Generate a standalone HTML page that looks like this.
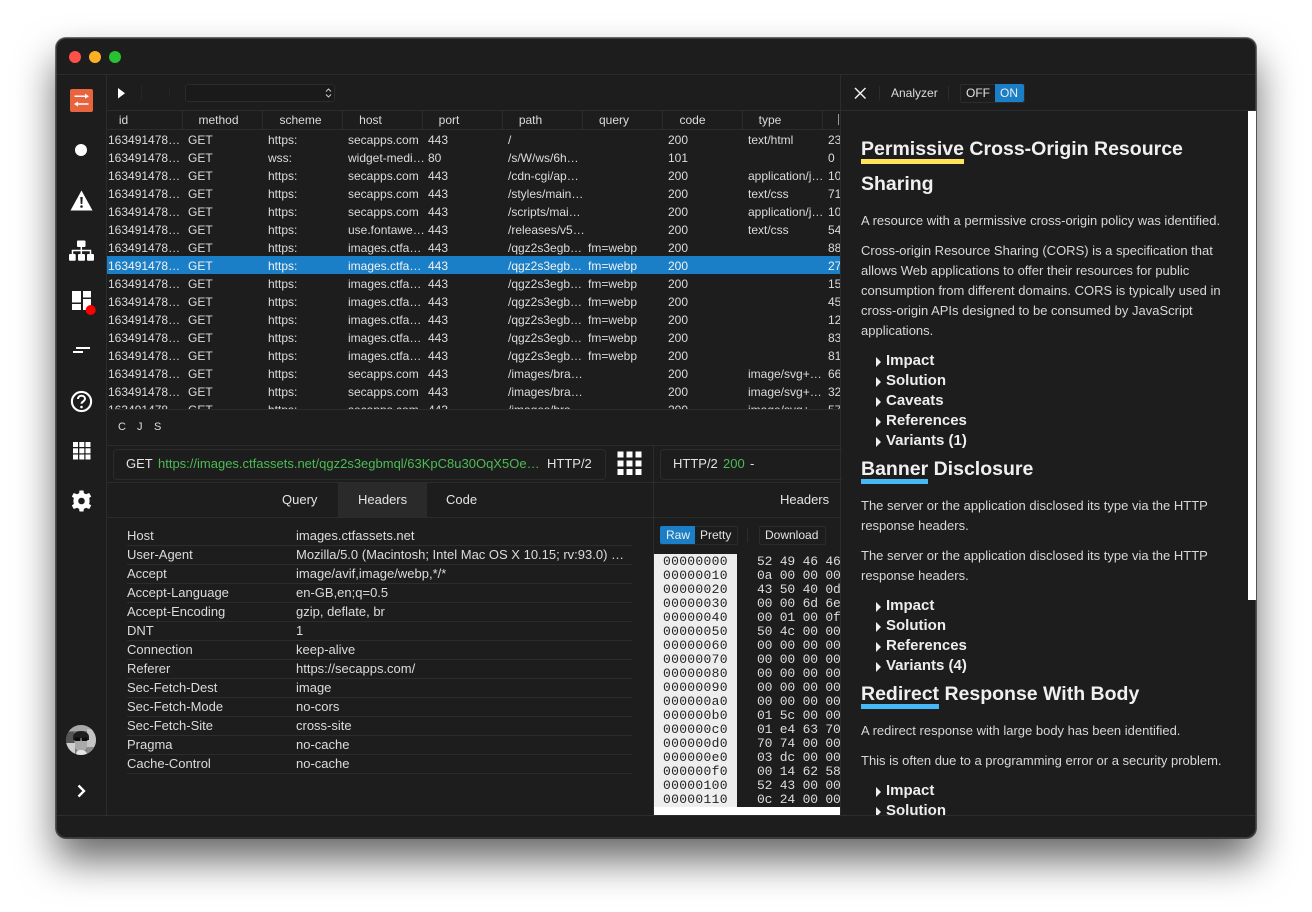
<!DOCTYPE html>
<html><head><meta charset="utf-8"><title>Analyzer</title>
<style>
html,body{margin:0;padding:0;width:1312px;height:912px;background:#fff;overflow:hidden}
body{font-family:"Liberation Sans",sans-serif;color:#e4e4e4;font-size:12px}
#w{position:absolute;left:56px;top:38px;width:1200px;height:800px;box-sizing:border-box;background:#1d1d1d;border-radius:10px;box-shadow:inset 0 0 0 1px #3c3c3c,0 0 0 1px rgba(0,0,0,.55),0 22px 40px rgba(0,0,0,.6);overflow:hidden}
#a{position:absolute;left:0;top:0;width:1312px;height:912px}
#a div,#a span,#a svg{position:absolute}
.h{height:1px;background:#2c2c2c}
.v{width:1px;background:#2c2c2c}
.t{white-space:nowrap;line-height:18px;height:18px}
#tbl{left:107px;top:130px;width:733px;height:279px;overflow:hidden;line-height:18px}
.r{left:0;width:733px;height:18px;color:#dcdcdc}
.r span{white-space:nowrap;top:1px}
.r span:nth-child(1){left:1px}.r span:nth-child(2){left:81px}.r span:nth-child(3){left:161px}.r span:nth-child(4){left:241px}.r span:nth-child(5){left:321px}.r span:nth-child(6){left:401px}.r span:nth-child(7){left:481px}.r span:nth-child(8){left:561px}.r span:nth-child(9){left:641px}.r span:nth-child(10){left:721px}
.sel{background:#1b7fc7;color:#f2f2f2}
.hc{top:111px;height:18px;line-height:18px;text-align:center;color:#dcdcdc}
.k{left:127px}.val{left:296px}
.kv{color:#dcdcdc;font-size:13px}
.p{left:861px;font-size:13px;color:#d8d8d8;white-space:nowrap;line-height:20px;height:20px}
.li{left:886px;font-size:15px;font-weight:bold;color:#eee;white-space:nowrap;line-height:20px;height:20px}
.tri{left:876px;width:0;height:0;border-left:5px solid #eee;border-top:5px solid transparent;border-bottom:5px solid transparent}
.hh{left:861px;font-size:19.5px;font-weight:bold;color:#f0f0f0;white-space:nowrap;line-height:30px;height:30px}
.off{color:#222;font:13px/14px "Liberation Mono",monospace;letter-spacing:.3px;white-space:pre}
.hex{color:#ddd;font:13px/14px "Liberation Mono",monospace;letter-spacing:-.2px;white-space:pre}
</style></head><body>
<div id="w"></div>
<div id="a">
<!-- traffic lights -->
<div style="left:69px;top:51px;width:12px;height:12px;border-radius:50%;background:#fd5049"></div>
<div style="left:89px;top:51px;width:12px;height:12px;border-radius:50%;background:#fdb024"></div>
<div style="left:109px;top:51px;width:12px;height:12px;border-radius:50%;background:#27c132"></div>
<!-- frame lines -->
<div class="h" style="left:57px;top:74px;width:1198px"></div>
<div class="v" style="left:106px;top:75px;height:740px"></div>
<div class="h" style="left:57px;top:815px;width:1198px"></div>
<div class="h" style="left:107px;top:110px;width:1148px"></div>
<div class="h" style="left:107px;top:129px;width:734px"></div>
<div class="v" style="left:840px;top:75px;height:740px"></div>
<div class="h" style="left:107px;top:409px;width:734px"></div>
<div class="h" style="left:107px;top:445px;width:734px"></div>
<div class="h" style="left:107px;top:482px;width:734px"></div>
<div class="h" style="left:107px;top:517px;width:734px"></div>
<div class="v" style="left:653px;top:446px;height:369px"></div>

<!-- sidebar icons -->
<svg style="left:70px;top:89px" width="23" height="23" viewBox="0 0 23 23"><rect width="23" height="23" rx="2" fill="#e8643c"/><path d="M4.500 7.200h11M7.500 15h11" stroke="#fff" stroke-width="1.500" fill="none"/><path d="M15 4.700l4 2.500-4 2.500zM8 12.500l-4 2.500 4 2.500z" fill="#fff"/></svg>
<svg style="left:75px;top:144px" width="12" height="12"><circle cx="6" cy="6" r="6" fill="#fff"/></svg>
<svg style="left:70px;top:190px" width="23" height="21" viewBox="0 0 23 21"><path d="M11.500 0.500L22.500 20.500H.5z" fill="#fff"/><path d="M10.300 7h2.400l-.4 7h-1.600z" fill="#1d1d1d"/><circle cx="11.500" cy="16.500" r="1.300" fill="#1d1d1d"/></svg>
<svg style="left:69px;top:240px" width="25" height="21" viewBox="0 0 25 21"><rect x="8" y="0.500" width="8.500" height="6.500" rx="1" fill="#fff"/><rect x="0" y="14" width="6.700" height="6.700" rx="1" fill="#fff"/><rect x="9" y="14" width="7" height="6.700" rx="1" fill="#fff"/><rect x="18" y="14" width="7" height="6.700" rx="1" fill="#fff"/><path d="M12.300 7v7M3.500 14v-3.500h18V14" stroke="#fff" stroke-width="1.500" fill="none"/></svg>
<svg style="left:72px;top:291px" width="26" height="26" viewBox="0 0 26 26"><rect x="0" y="0" width="9" height="11.500" fill="#fff"/><rect x="0" y="13" width="9" height="6" fill="#fff"/><rect x="11" y="0" width="8" height="6.500" fill="#fff"/><rect x="11" y="8" width="8" height="11" fill="#fff"/><circle cx="18.700" cy="19" r="5" fill="#f00"/></svg>
<svg style="left:73px;top:346px" width="17" height="9" viewBox="0 0 17 9"><rect x="3" y="1" width="14" height="2" fill="#fff"/><rect x="0" y="5" width="10" height="2" fill="#fff"/></svg>
<svg style="left:70px;top:390px" width="23" height="23" viewBox="0 0 23 23"><circle cx="11.500" cy="11.500" r="9.600" stroke="#fff" stroke-width="2.100" fill="none"/><path d="M8 9c0-2 1.500-3.300 3.500-3.300S15 7 15 8.800c0 2.600-3.500 2.600-3.500 5" stroke="#fff" stroke-width="2" fill="none"/><circle cx="11.500" cy="17" r="1.300" fill="#fff"/></svg>
<svg style="left:73px;top:442px" width="18" height="18" viewBox="0 0 18 18" fill="#fff"><rect x="0" y="0" width="5" height="5"/><rect x="6.300" y="0" width="5" height="5"/><rect x="12.500" y="0" width="5" height="5"/><rect x="0" y="6.300" width="5" height="5"/><rect x="6.300" y="6.300" width="5" height="5"/><rect x="12.500" y="6.300" width="5" height="5"/><rect x="0" y="12.500" width="5" height="5"/><rect x="6.300" y="12.500" width="5" height="5"/><rect x="12.500" y="12.500" width="5" height="5"/></svg>
<svg style="left:71px;top:490px" width="21" height="22" viewBox="0 0 21 22"><circle cx="10.500" cy="11" r="5.700" fill="none" stroke="#fff" stroke-width="4.800"/><path d="M8.500 0.500h4l.5 3.500h-5zM8.500 21.500h4l.5-3.500h-5zM.8 6.500l2-3.500 3.300 1.300-2.500 4.300zM20.200 15.500l-2 3.500-3.300-1.300 2.500-4.300zM.8 15.500l2 3.500 3.300-1.300-2.500-4.300zM20.200 6.500l-2-3.500-3.300 1.300 2.500 4.300z" fill="#fff"/></svg>
<svg style="left:66px;top:725px" width="30" height="30" viewBox="0 0 30 30"><defs><clipPath id="c"><circle cx="15" cy="15" r="15"/></clipPath></defs><g clip-path="url(#c)"><rect width="30" height="30" fill="#7a7a7a"/><rect x="0" y="0" width="30" height="6" fill="#a8a8a8"/><rect x="21" y="4" width="9" height="18" fill="#c4c4c4"/><rect x="0" y="18" width="9" height="12" fill="#cfcfcf"/><rect x="0" y="7" width="8" height="11" fill="#555"/><path d="M7 12C7 4 23 4 23 12v3H7z" fill="#1e1e1e"/><path d="M9 13h12v8c0 4-3 5-6 5s-6-1-6-5z" fill="#a9a9a9"/><rect x="8.500" y="12.500" width="6" height="3.500" rx="1" fill="#0c0c0c"/><rect x="15.500" y="12.500" width="6" height="3.500" rx="1" fill="#0c0c0c"/><path d="M10 30c0-4 2-5 5-5s6 1 6 5z" fill="#e4e4e4"/><rect x="21" y="22" width="9" height="8" fill="#8c8c8c"/></g></svg>
<svg style="left:76px;top:784px" width="10" height="14" viewBox="0 0 10 14"><path d="M2.500 1.500L8 7 2.500 12.500" stroke="#fff" stroke-width="2.300" fill="none"/></svg>

<!-- toolbar -->
<svg style="left:118px;top:88px" width="8" height="11"><path d="M0 0L7 5.200 0 10.500z" fill="#fff"/></svg>
<div class="v" style="left:141px;top:85px;height:15px;background:#262626"></div>
<div class="v" style="left:169px;top:89px;height:7px;background:#262626"></div>
<div style="left:185px;top:84px;width:148px;height:16px;border:1px solid #2c2c2c;border-radius:3px;background:#1a1a1a"></div>
<svg style="left:325px;top:87px" width="7" height="12" viewBox="0 0 7 12"><path d="M1 4.500L3.500 2 6 4.500M1 7.500L3.500 10 6 7.500" stroke="#ccc" stroke-width="1" fill="none"/></svg>

<!-- table header -->
<span class="hc" style="left:107px;width:33px">id</span>
<span class="hc" style="left:183px;width:71px">method</span>
<span class="hc" style="left:263px;width:75px">scheme</span>
<span class="hc" style="left:343px;width:55px">host</span>
<span class="hc" style="left:423px;width:52px">port</span>
<span class="hc" style="left:503px;width:55px">path</span>
<span class="hc" style="left:583px;width:62px">query</span>
<span class="hc" style="left:663px;width:59px">code</span>
<span class="hc" style="left:743px;width:54px">type</span>
<div class="v" style="left:182px;top:111px;height:18px"></div>
<div class="v" style="left:262px;top:111px;height:18px"></div>
<div class="v" style="left:342px;top:111px;height:18px"></div>
<div class="v" style="left:422px;top:111px;height:18px"></div>
<div class="v" style="left:502px;top:111px;height:18px"></div>
<div class="v" style="left:582px;top:111px;height:18px"></div>
<div class="v" style="left:662px;top:111px;height:18px"></div>
<div class="v" style="left:742px;top:111px;height:18px"></div>
<div class="v" style="left:822px;top:111px;height:18px"></div>
<div style="left:838px;top:114px;width:1px;height:11px;background:#999"></div>

<!-- table -->
<div id="tbl">
<div class="r" style="top:0"><span>163491478…</span><span>GET</span><span>https:</span><span>secapps.com</span><span>443</span><span>/</span><span></span><span>200</span><span>text/html</span><span>23</span></div>
<div class="r" style="top:18px"><span>163491478…</span><span>GET</span><span>wss:</span><span>widget-medi…</span><span>80</span><span>/s/W/ws/6h…</span><span></span><span>101</span><span></span><span>0</span></div>
<div class="r" style="top:36px"><span>163491478…</span><span>GET</span><span>https:</span><span>secapps.com</span><span>443</span><span>/cdn-cgi/ap…</span><span></span><span>200</span><span>application/j…</span><span>10</span></div>
<div class="r" style="top:54px"><span>163491478…</span><span>GET</span><span>https:</span><span>secapps.com</span><span>443</span><span>/styles/main…</span><span></span><span>200</span><span>text/css</span><span>71</span></div>
<div class="r" style="top:72px"><span>163491478…</span><span>GET</span><span>https:</span><span>secapps.com</span><span>443</span><span>/scripts/mai…</span><span></span><span>200</span><span>application/j…</span><span>10</span></div>
<div class="r" style="top:90px"><span>163491478…</span><span>GET</span><span>https:</span><span>use.fontawe…</span><span>443</span><span>/releases/v5…</span><span></span><span>200</span><span>text/css</span><span>54</span></div>
<div class="r" style="top:108px"><span>163491478…</span><span>GET</span><span>https:</span><span>images.ctfa…</span><span>443</span><span>/qgz2s3egb…</span><span>fm=webp</span><span>200</span><span></span><span>88</span></div>
<div class="r sel" style="top:126px"><span>163491478…</span><span>GET</span><span>https:</span><span>images.ctfa…</span><span>443</span><span>/qgz2s3egb…</span><span>fm=webp</span><span>200</span><span></span><span>27</span></div>
<div class="r" style="top:144px"><span>163491478…</span><span>GET</span><span>https:</span><span>images.ctfa…</span><span>443</span><span>/qgz2s3egb…</span><span>fm=webp</span><span>200</span><span></span><span>15</span></div>
<div class="r" style="top:162px"><span>163491478…</span><span>GET</span><span>https:</span><span>images.ctfa…</span><span>443</span><span>/qgz2s3egb…</span><span>fm=webp</span><span>200</span><span></span><span>45</span></div>
<div class="r" style="top:180px"><span>163491478…</span><span>GET</span><span>https:</span><span>images.ctfa…</span><span>443</span><span>/qgz2s3egb…</span><span>fm=webp</span><span>200</span><span></span><span>12</span></div>
<div class="r" style="top:198px"><span>163491478…</span><span>GET</span><span>https:</span><span>images.ctfa…</span><span>443</span><span>/qgz2s3egb…</span><span>fm=webp</span><span>200</span><span></span><span>83</span></div>
<div class="r" style="top:216px"><span>163491478…</span><span>GET</span><span>https:</span><span>images.ctfa…</span><span>443</span><span>/qgz2s3egb…</span><span>fm=webp</span><span>200</span><span></span><span>81</span></div>
<div class="r" style="top:234px"><span>163491478…</span><span>GET</span><span>https:</span><span>secapps.com</span><span>443</span><span>/images/bra…</span><span></span><span>200</span><span>image/svg+…</span><span>66</span></div>
<div class="r" style="top:252px"><span>163491478…</span><span>GET</span><span>https:</span><span>secapps.com</span><span>443</span><span>/images/bra…</span><span></span><span>200</span><span>image/svg+…</span><span>32</span></div>
<div class="r" style="top:270px"><span>163491478…</span><span>GET</span><span>https:</span><span>secapps.com</span><span>443</span><span>/images/bra…</span><span></span><span>200</span><span>image/svg+…</span><span>57</span></div>
</div>

<!-- C J S -->
<span class="t" style="left:118px;top:418px;font-size:11px;color:#ddd">C</span>
<span class="t" style="left:137px;top:418px;font-size:11px;color:#ddd">J</span>
<span class="t" style="left:154px;top:418px;font-size:11px;color:#ddd">S</span>

<!-- request line -->
<div style="left:113px;top:449px;width:491px;height:29px;border:1px solid #2c2c2c;border-radius:4px"></div>
<span class="t" style="left:126px;top:455px;font-size:13px;color:#e4e4e4">GET</span>
<span class="t" style="left:158px;top:455px;font-size:13px;color:#4cbb56;width:382px;overflow:hidden;text-overflow:ellipsis">https://images.ctfassets.net/qgz2s3egbmql/63KpC8u30OqX5Oe4wWm2ayGuaMaLq6PfGkEfT8Q</span>
<span class="t" style="left:547px;top:455px;font-size:13px;color:#e4e4e4">HTTP/2</span>
<svg style="left:617px;top:451px" width="25" height="25" viewBox="0 0 25 25" fill="#fff"><rect x="0.500" y="0.500" width="6" height="6"/><rect x="9.500" y="0.500" width="6" height="6"/><rect x="18.500" y="0.500" width="6" height="6"/><rect x="0.500" y="9.500" width="6" height="6"/><rect x="9.500" y="9.500" width="6" height="6"/><rect x="18.500" y="9.500" width="6" height="6"/><rect x="0.500" y="18" width="6" height="6"/><rect x="9.500" y="18" width="6" height="6"/><rect x="18.500" y="18" width="6" height="6"/></svg>

<!-- response line -->
<div style="left:660px;top:449px;width:190px;height:29px;border:1px solid #2c2c2c;border-radius:4px;clip-path:inset(-2px 10px -2px -2px)"></div>
<span class="t" style="left:673px;top:455px;font-size:13px;color:#e4e4e4">HTTP/2</span>
<span class="t" style="left:723px;top:455px;font-size:13px;color:#4cbb56">200</span>
<span class="t" style="left:750px;top:455px;font-size:13px;color:#e4e4e4">-</span>

<!-- tabs -->
<div style="left:338px;top:483px;width:89px;height:34px;background:#2a2a2a"></div>
<span class="t" style="left:282px;top:491px;font-size:13px">Query</span>
<span class="t" style="left:358px;top:491px;font-size:13px">Headers</span>
<span class="t" style="left:446px;top:491px;font-size:13px">Code</span>
<span class="t" style="left:780px;top:491px;font-size:13px">Headers</span>

<!-- req headers -->
<span class="t kv k" style="top:527px">Host</span><span class="t kv val" style="top:527px">images.ctfassets.net</span>
<span class="t kv k" style="top:546px">User-Agent</span><span class="t kv val" style="top:546px">Mozilla/5.0 (Macintosh; Intel Mac OS X 10.15; rv:93.0) …</span>
<span class="t kv k" style="top:565px">Accept</span><span class="t kv val" style="top:565px">image/avif,image/webp,*/*</span>
<span class="t kv k" style="top:584px">Accept-Language</span><span class="t kv val" style="top:584px">en-GB,en;q=0.5</span>
<span class="t kv k" style="top:603px">Accept-Encoding</span><span class="t kv val" style="top:603px">gzip, deflate, br</span>
<span class="t kv k" style="top:622px">DNT</span><span class="t kv val" style="top:622px">1</span>
<span class="t kv k" style="top:641px">Connection</span><span class="t kv val" style="top:641px">keep-alive</span>
<span class="t kv k" style="top:660px">Referer</span><span class="t kv val" style="top:660px">https://secapps.com/</span>
<span class="t kv k" style="top:679px">Sec-Fetch-Dest</span><span class="t kv val" style="top:679px">image</span>
<span class="t kv k" style="top:698px">Sec-Fetch-Mode</span><span class="t kv val" style="top:698px">no-cors</span>
<span class="t kv k" style="top:717px">Sec-Fetch-Site</span><span class="t kv val" style="top:717px">cross-site</span>
<span class="t kv k" style="top:736px">Pragma</span><span class="t kv val" style="top:736px">no-cache</span>
<span class="t kv k" style="top:755px">Cache-Control</span><span class="t kv val" style="top:755px">no-cache</span>
<div class="h" style="left:127px;top:545px;width:505px"></div>
<div class="h" style="left:127px;top:564px;width:505px"></div>
<div class="h" style="left:127px;top:583px;width:505px"></div>
<div class="h" style="left:127px;top:602px;width:505px"></div>
<div class="h" style="left:127px;top:621px;width:505px"></div>
<div class="h" style="left:127px;top:640px;width:505px"></div>
<div class="h" style="left:127px;top:659px;width:505px"></div>
<div class="h" style="left:127px;top:678px;width:505px"></div>
<div class="h" style="left:127px;top:697px;width:505px"></div>
<div class="h" style="left:127px;top:716px;width:505px"></div>
<div class="h" style="left:127px;top:735px;width:505px"></div>
<div class="h" style="left:127px;top:754px;width:505px"></div>
<div class="h" style="left:127px;top:773px;width:505px"></div>

<!-- raw/pretty -->
<div style="left:660px;top:526px;width:76px;height:17px;border:1px solid #2c2c2c;border-radius:2px"></div>
<div style="left:660px;top:526px;width:35px;height:18px;background:#1b7fc7;border-radius:2px 0 0 2px"></div>
<span class="t" style="left:666px;top:526px;color:#eee">Raw</span>
<span class="t" style="left:700px;top:526px;color:#e4e4e4">Pretty</span>
<div class="v" style="left:747px;top:528px;height:14px"></div>
<div style="left:759px;top:526px;width:65px;height:17px;border:1px solid #2c2c2c;border-radius:2px"></div>
<span class="t" style="left:765px;top:526px;color:#e4e4e4">Download</span>

<!-- hex -->
<div style="left:654px;top:554px;width:83px;height:253px;background:#eee"></div>
<div style="left:654px;top:807px;width:186px;height:8px;background:#fff"></div>
<div class="off" style="left:663px;top:555px">00000000
00000010
00000020
00000030
00000040
00000050
00000060
00000070
00000080
00000090
000000a0
000000b0
000000c0
000000d0
000000e0
000000f0
00000100
00000110</div>
<div style="left:737px;top:554px;width:103px;height:253px;overflow:hidden"><div class="hex" style="left:20px;top:1px">52 49 46 46
0a 00 00 00
43 50 40 0d
00 00 6d 6e
00 01 00 0f
50 4c 00 00
00 00 00 00
00 00 00 00
00 00 00 00
00 00 00 00
00 00 00 00
01 5c 00 00
01 e4 63 70
70 74 00 00
03 dc 00 00
00 14 62 58
52 43 00 00
0c 24 00 00</div></div>

<!-- analyzer bar -->
<svg style="left:854px;top:87px" width="13" height="13" viewBox="0 0 13 13"><path d="M1 1l10.500 10.500M11.500 1L1 11.500" stroke="#eee" stroke-width="1.500" fill="none"/></svg>
<div class="v" style="left:879px;top:86px;height:14px"></div>
<span class="t" style="left:891px;top:84px;color:#ddd">Analyzer</span>
<div class="v" style="left:948px;top:86px;height:14px"></div>
<div style="left:960px;top:84px;width:63px;height:17px;border:1px solid #2c2c2c;border-radius:2px"></div>
<div style="left:995px;top:84px;width:29px;height:18px;background:#1b7fc7;border-radius:0 2px 2px 0"></div>
<span class="t" style="left:966px;top:84px;color:#e4e4e4">OFF</span>
<span class="t" style="left:1000px;top:84px;color:#eee">ON</span>

<!-- scrollbar -->
<div style="left:1248px;top:111px;width:8px;height:489px;background:#fff"></div>

<!-- analyzer panel -->
<div style="left:0;top:0;width:1248px;height:815px;overflow:hidden">
<div class="hh" style="top:134px">Permissive Cross-Origin Resource</div>
<div style="left:861px;top:159px;width:103px;height:5px;background:#ffe359"></div>
<div class="hh" style="top:169px">Sharing</div>
<div class="p" style="top:211px">A resource with a permissive cross-origin policy was identified.</div>
<div class="p" style="top:241px">Cross-origin Resource Sharing (CORS) is a specification that</div>
<div class="p" style="top:261px">allows Web applications to offer their resources for public</div>
<div class="p" style="top:281px">consumption from different domains. CORS is typically used in</div>
<div class="p" style="top:301px">cross-origin APIs designed to be consumed by JavaScript</div>
<div class="p" style="top:321px">applications.</div>
<div class="tri" style="top:357px"></div><div class="li" style="top:351px">Impact</div>
<div class="tri" style="top:377px"></div><div class="li" style="top:371px">Solution</div>
<div class="tri" style="top:397px"></div><div class="li" style="top:391px">Caveats</div>
<div class="tri" style="top:417px"></div><div class="li" style="top:411px">References</div>
<div class="tri" style="top:437px"></div><div class="li" style="top:431px">Variants (1)</div>
<div class="hh" style="top:454px">Banner Disclosure</div>
<div style="left:861px;top:479px;width:67px;height:5px;background:#45b8f5"></div>
<div class="p" style="top:496px">The server or the application disclosed its type via the HTTP</div>
<div class="p" style="top:516px">response headers.</div>
<div class="p" style="top:546px">The server or the application disclosed its type via the HTTP</div>
<div class="p" style="top:566px">response headers.</div>
<div class="tri" style="top:602px"></div><div class="li" style="top:596px">Impact</div>
<div class="tri" style="top:622px"></div><div class="li" style="top:616px">Solution</div>
<div class="tri" style="top:642px"></div><div class="li" style="top:636px">References</div>
<div class="tri" style="top:662px"></div><div class="li" style="top:656px">Variants (4)</div>
<div class="hh" style="top:679px">Redirect Response With Body</div>
<div style="left:861px;top:704px;width:78px;height:5px;background:#45b8f5"></div>
<div class="p" style="top:721px">A redirect response with large body has been identified.</div>
<div class="p" style="top:751px">This is often due to a programming error or a security problem.</div>
<div class="tri" style="top:787px"></div><div class="li" style="top:781px">Impact</div>
<div class="tri" style="top:807px"></div><div class="li" style="top:801px">Solution</div>
</div>
</div>
</body></html>
